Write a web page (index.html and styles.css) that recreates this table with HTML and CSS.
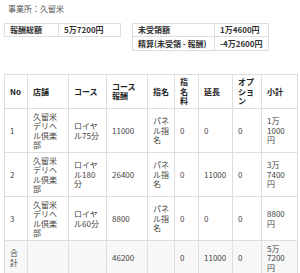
FILE: index.html
```html
<!DOCTYPE html>
<html lang="ja">
<head>
    <meta charset="UTF-8">
    <meta name="viewport" content="width=device-width, initial-scale=1.0">
    <title>報酬明細</title>
    <link rel="stylesheet" href="styles.css">
</head>
<body>
    <p class="office">事業所：久留米</p>
    <div class="summary">
        <table class="sum sum-total">
            <tr><th>報酬総額</th><td>5万7200円</td></tr>
        </table>
        <table class="sum sum-unpaid">
            <tr><th>未受領額</th><td>1万4600円</td></tr>
            <tr><th>精算(未受領 - 報酬)</th><td>-4万2600円</td></tr>
        </table>
    </div>
    <table class="detail">
        <colgroup>
            <col class="c-no">
            <col class="c-shop">
            <col class="c-course">
            <col class="c-fee">
            <col class="c-nom">
            <col class="c-nomfee">
            <col class="c-ext">
            <col class="c-opt">
            <col class="c-sub">
        </colgroup>
        <tr>
            <th>No</th><th>店舗</th><th>コース</th><th>コース報酬</th><th>指名</th><th>指名料</th><th>延長</th><th>オプション</th><th>小計</th>
        </tr>
        <tr>
            <td>1</td><td>久留米デリヘル倶楽部</td><td>ロイヤル75分</td><td>11000</td><td>パネル指名</td><td>0</td><td>0</td><td>0</td><td>1万1000円</td>
        </tr>
        <tr>
            <td>2</td><td>久留米デリヘル倶楽部</td><td>ロイヤル180分</td><td>26400</td><td>パネル指名</td><td>0</td><td>11000</td><td>0</td><td>3万7400円</td>
        </tr>
        <tr>
            <td>3</td><td>久留米デリヘル倶楽部</td><td>ロイヤル60分</td><td>8800</td><td>パネル指名</td><td>0</td><td>0</td><td>0</td><td>8800円</td>
        </tr>
        <tr class="total">
            <td>合計</td><td></td><td></td><td>46200</td><td></td><td>0</td><td>11000</td><td>0</td><td>5万7200円</td>
        </tr>
    </table>
</body>
</html>
```

FILE: styles.css
```css
body {
    margin: 0;
    padding: 0 4px;
    font-family: "Noto Sans CJK JP", sans-serif;
    font-size: 8px;
    line-height: 9.5px;
    color: #444;
    background: #fff;
}
.office {
    margin: 4px 0 0 4px;
    color: #555;
}
.summary {
    display: flex;
    align-items: flex-start;
    gap: 11px;
    margin-top: 9px;
}
table {
    border-collapse: collapse;
}
th, td {
    border: 1px solid #ddd;
    text-align: left;
    vertical-align: middle;
}
.sum th, .sum td {
    font-weight: bold;
    color: #333;
    padding: 1.5px 5px;
}
.sum-total {
    width: 117px;
}
.sum-total th {
    width: 43px;
}
.sum-unpaid {
    width: 137px;
}
.sum-unpaid th {
    width: 71px;
}
.detail {
    table-layout: fixed;
    width: 293px;
    margin-top: 23px;
}
.detail th, .detail td {
    padding: 2.5px 5px;
}
.detail th {
    font-weight: bold;
    color: #222;
}
.c-no { width: 23px; }
.c-shop { width: 41px; }
.c-course { width: 38px; }
.c-fee { width: 41px; }
.c-nom { width: 27px; }
.c-nomfee { width: 24px; }
.c-ext { width: 34px; }
.c-opt { width: 29px; }
.c-sub { width: 36px; }
.total td {
    background: #f7f7f7;
}
```
